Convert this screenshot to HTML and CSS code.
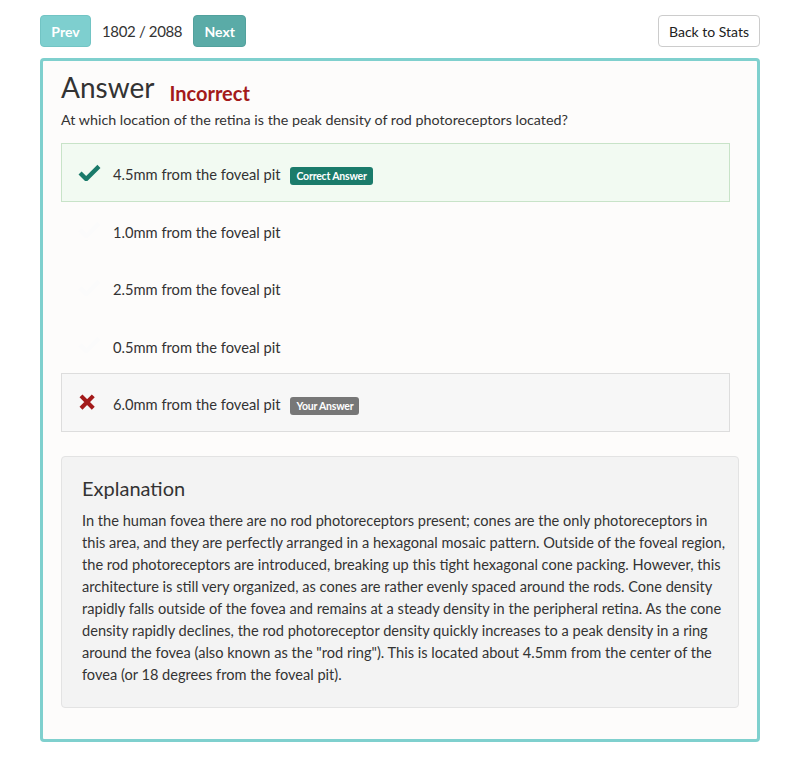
FILE: index.html
```html
<!DOCTYPE html>
<html>
<head>
<meta charset="utf-8">
<link rel="stylesheet" href="styles.css">
</head>
<body>
<div class="page">
  <div class="topbar">
    <div class="nav">
      <button class="btn btn-prev">Prev</button>
      <span class="counter">1802 / 2088</span>
      <button class="btn btn-next">Next</button>
    </div>
    <button class="btn btn-back">Back to Stats</button>
  </div>
  <div class="card">
    <div class="title-row">
      <h1 class="title">Answer</h1>
      <span class="verdict">Incorrect</span>
    </div>
    <p class="question">At which location of the retina is the peak density of rod photoreceptors located?</p>
    <ul class="options">
      <li class="option correct">
        <svg class="icon" viewBox="0 0 24 18" width="23" height="17"><path d="M2 9.5 L8.5 16 L22 2.5" fill="none" stroke="#1a7a6a" stroke-width="4.6" stroke-linecap="butt" stroke-linejoin="miter"/></svg>
        <span class="opt-text">4.5mm from the foveal pit</span>
        <span class="badge badge-correct">Correct Answer</span>
      </li>
      <li class="option">
        <svg class="icon" viewBox="0 0 24 18" width="23" height="17"><path d="M2 9.5 L8.5 16 L22 2.5" fill="none" stroke="#fbfbfb" stroke-width="4.6"/></svg>
        <span class="opt-text">1.0mm from the foveal pit</span>
      </li>
      <li class="option">
        <svg class="icon" viewBox="0 0 24 18" width="23" height="17"><path d="M2 9.5 L8.5 16 L22 2.5" fill="none" stroke="#fbfbfb" stroke-width="4.6"/></svg>
        <span class="opt-text">2.5mm from the foveal pit</span>
      </li>
      <li class="option">
        <svg class="icon" viewBox="0 0 24 18" width="23" height="17"><path d="M2 9.5 L8.5 16 L22 2.5" fill="none" stroke="#fbfbfb" stroke-width="4.6"/></svg>
        <span class="opt-text">0.5mm from the foveal pit</span>
      </li>
      <li class="option wrong">
        <svg class="icon" viewBox="0 0 24 18" width="23" height="17"><path d="M3 2 L16 15 M16 2 L3 15" fill="none" stroke="#a31a1a" stroke-width="4.4"/></svg>
        <span class="opt-text">6.0mm from the foveal pit</span>
        <span class="badge badge-yours">Your Answer</span>
      </li>
    </ul>
    <div class="well">
      <h2 class="well-title">Explanation</h2>
      <p class="well-text">In the human fovea there are no rod photoreceptors present; cones are the only photoreceptors in<br>this area, and they are perfectly arranged in a hexagonal mosaic pattern. Outside of the foveal region,<br>the rod photoreceptors are introduced, breaking up this tight hexagonal cone packing. However, this<br>architecture is still very organized, as cones are rather evenly spaced around the rods. Cone density<br>rapidly falls outside of the fovea and remains at a steady density in the peripheral retina. As the cone<br>density rapidly declines, the rod photoreceptor density quickly increases to a peak density in a ring<br>around the fovea (also known as the "rod ring"). This is located about 4.5mm from the center of the<br>fovea (or 18 degrees from the foveal pit).</p>
    </div>
  </div>
</div>
</body>
</html>
```

FILE: styles.css
```css
* { box-sizing: border-box; }
body {
  margin: 0;
  background: #ffffff;
  font-family: Lato, "Open Sans", sans-serif;
  color: #333333;
  font-size: 14px;
}
.page {
  padding: 15px 40px 0 40px;
}
.topbar {
  display: flex;
  justify-content: space-between;
  align-items: center;
  height: 32px;
}
.nav {
  display: flex;
  align-items: center;
}
.btn {
  font-family: Lato, "Open Sans", sans-serif;
  height: 32px;
  border-radius: 4px;
  font-size: 14px;
  cursor: pointer;
}
.btn-prev {
  background: #7ecfcf;
  border: 1px solid #72c4c4;
  color: #ffffff;
  font-weight: 700;
  width: 51px;
  padding: 0;
}
.btn-next {
  background: #5aaba7;
  border: 1px solid #52a19d;
  color: #ffffff;
  font-weight: 700;
  width: 53px;
  padding: 0;
}
.counter {
  font-size: 15px;
  letter-spacing: -0.35px;
  color: #333;
  margin: 0 11px;
}
.btn-back {
  background: #ffffff;
  border: 1px solid #cccccc;
  color: #222;
  width: 102px;
  padding: 0;
}
.card {
  margin-top: 11px;
  border: 3px solid #7fd0ce;
  border-radius: 4px;
  background: #fdfcfb;
  padding: 8px 18px 31px 18px;
  width: 720px;
}
.title-row {
  display: flex;
  align-items: baseline;
}
.title {
  font-size: 28px;
  font-weight: 400;
  margin: 0;
  line-height: 36px;
  color: #333;
}
.verdict {
  color: #a31a1a;
  font-weight: 700;
  font-size: 20px;
  margin-left: 15px;
  position: relative;
  top: 3px;
}
.question {
  margin: 5px 0 13px 0;
  line-height: 20px;
  font-size: 14.3px;
}
.options {
  list-style: none;
  margin: 0;
  padding: 0;
  width: 669px;
}
.option {
  display: flex;
  align-items: center;
  height: 58.5px;
  margin-bottom: -1px;
  border: 1px solid transparent;
  padding-left: 16px;
}
.option.correct {
  background: #f2faf2;
  border-color: #c8e3c8;
}
.option.wrong {
  background: #f7f7f7;
  border-color: #dddddd;
}
.icon {
  flex: none;
  margin-right: 12px;
}
.opt-text {
  font-size: 14.7px;
  color: #333;
  margin-top: 4px;
}
.badge {
  display: inline-block;
  margin-left: 10px;
  margin-top: 7px;
  color: #fff;
  font-weight: 700;
  font-size: 10.5px;
  line-height: 18px;
  padding: 0 6px;
  border-radius: 3px;
  letter-spacing: -0.2px;
}
.badge-correct { background: #1b7b6b; }
.badge-yours { background: #777777; }
.well {
  margin-top: 25px;
  background: #f3f3f3;
  border: 1px solid #e3e3e3;
  border-radius: 4px;
  padding: 18px 20px 21px 20px;
}
.well-title {
  font-size: 20px;
  font-weight: 400;
  margin: 0 0 9px 0;
  line-height: 26px;
  color: #333;
}
.well-text {
  margin: 0;
  line-height: 22px;
  font-size: 14.6px;
  white-space: nowrap;
  color: #333;
}
```
